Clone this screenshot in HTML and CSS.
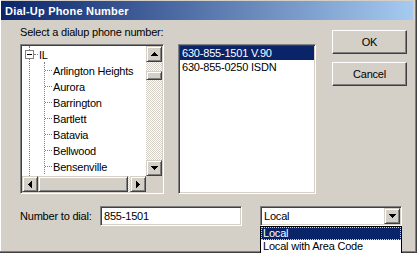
FILE: index.html
```html
<!DOCTYPE html>
<html lang="en">
<head>
  <meta charset="UTF-8">
  <title>Dial-Up Phone Number</title>
  <link rel="stylesheet" href="styles.css">
</head>
<body>
  <div class="window">
    <div class="titlebar">Dial-Up Phone Number</div>

    <div class="dialog">
      <div class="top">
        <div class="pick">
          <div class="caption">Select a dialup phone number:</div>
          <div class="lists">
            <div class="treebox sunken">
              <div class="tree-grid">
                <div class="tree-view">
                  <ul class="tree">
                    <li>
                      <div class="row"><span class="expander"></span><span class="hline"></span><span class="label">IL</span></div>
                      <ul class="children">
                        <li class="row">Arlington Heights</li>
                        <li class="row">Aurora</li>
                        <li class="row">Barrington</li>
                        <li class="row">Bartlett</li>
                        <li class="row">Batavia</li>
                        <li class="row">Bellwood</li>
                        <li class="row">Bensenville</li>
                      </ul>
                    </li>
                  </ul>
                </div>
                <div class="vscroll">
                  <div class="arrow raised">
                    <svg width="7" height="4"><path d="M3 0h1v1h1v1h1v1h1v1H0V3h1V2h1V1h1z"/></svg>
                  </div>
                  <div class="track"><div class="thumb raised v-thumb"></div></div>
                  <div class="arrow raised">
                    <svg width="7" height="4"><path d="M0 0h7v1H6v1H5v1H4v1H3V3H2V2H1V1H0z"/></svg>
                  </div>
                </div>
                <div class="hscroll">
                  <div class="arrow raised">
                    <svg width="4" height="7"><path d="M3 0h1v7H3V6H2V5H1V4H0V3h1V2h1V1h1z"/></svg>
                  </div>
                  <div class="thumb raised h-thumb"></div>
                  <div class="track"></div>
                  <div class="arrow raised">
                    <svg width="4" height="7"><path d="M0 0h1v1h1v1h1v1h1v1H3v1H2v1H1v1H0z"/></svg>
                  </div>
                </div>
                <div class="corner"></div>
              </div>
            </div>

            <div class="listbox sunken">
              <div class="list-inner">
                <div class="item selected">630-855-1501 V.90</div>
                <div class="item">630-855-0250 ISDN</div>
              </div>
            </div>
          </div>
        </div>

        <div class="buttons">
          <div class="btn">OK</div>
          <div class="btn">Cancel</div>
        </div>
      </div>

      <div class="dial-row">
        <div class="dial-label">Number to dial:</div>
        <div class="field sunken">855-1501</div>
        <div class="combo sunken">
          <span class="combo-text">Local</span>
          <div class="arrow raised">
            <svg width="7" height="4"><path d="M0 0h7v1H6v1H5v1H4v1H3V3H2V2H1V1H0z"/></svg>
          </div>
        </div>
      </div>
    </div>

    <div class="dropdown">
      <div class="option selected">Local</div>
      <div class="option">Local with Area Code</div>
    </div>
  </div>
</body>
</html>
```

FILE: styles.css
```css
* {
  margin: 0;
  padding: 0;
  box-sizing: border-box;
  font-family: 'Liberation Sans', Arial, sans-serif;
  font-size: 11px;
  letter-spacing: -0.2px;
}

body {
  background: #d4d0c8;
  width: 417px;
  height: 253px;
  overflow: hidden;
  color: #000;
}

.window {
  position: relative;
  height: 253px;
  padding: 1px 4px 0 1px;
  box-shadow: inset -1px -1px #404040, inset -2px -2px #808080, inset 1px 0 #fff;
}

.titlebar {
  height: 19px;
  line-height: 20px;
  padding-left: 4px;
  color: #fff;
  font-weight: bold;
  letter-spacing: 0.2px;
  background: linear-gradient(to right, #0a246a, #a6caf0);
}

.dialog {
  padding: 6px 0 0 19px;
}

.top {
  display: flex;
}

.caption {
  height: 13px;
  line-height: 13px;
  margin-bottom: 5px;
}

.lists {
  display: flex;
  gap: 14px;
}

/* 3d borders */
.sunken {
  border: 1px solid;
  border-color: #808080 #fff #fff #808080;
  padding: 1px;
  box-shadow: inset 1px 1px #404040, inset -1px -1px #d4d0c8;
  background: #fff;
}

.raised {
  background: #d4d0c8;
  border: 1px solid;
  border-color: #d4d0c8 #404040 #404040 #d4d0c8;
  box-shadow: inset 1px 1px #fff, inset -1px -1px #808080;
}

/* tree view */
.treebox {
  width: 144px;
  height: 150px;
}

.tree-grid {
  display: grid;
  grid-template-columns: 124px 16px;
  grid-template-rows: 130px 16px;
}

.tree-view {
  overflow: hidden;
  background: #fff;
}

.tree, .children {
  list-style: none;
}

.tree {
  margin-left: 7px;
  height: 130px;
  border-left: 1px dotted #808080;
}

.row {
  height: 16px;
  padding-top: 1px;
  display: flex;
  align-items: center;
  white-space: nowrap;
}

.expander {
  width: 9px;
  height: 9px;
  margin-left: -5px;
  border: 1px solid #808080;
  background: #fff;
  display: flex;
  align-items: center;
  justify-content: center;
}

.expander::after {
  content: '';
  width: 5px;
  height: 1px;
  background: #000;
}

.hline {
  width: 4px;
  border-top: 1px dotted #808080;
  margin-right: 1px;
}

.children {
  margin-left: 14px;
  border-left: 1px dotted #808080;
}

.children .row::before {
  content: '';
  width: 7px;
  border-top: 1px dotted #808080;
  margin-right: 1px;
}

/* scrollbars */
.vscroll, .hscroll {
  display: flex;
  background: repeating-conic-gradient(#fff 0 25%, #d4d0c8 0 50%) 0 0 / 2px 2px;
}

.vscroll {
  flex-direction: column;
}

.arrow {
  width: 16px;
  height: 16px;
  flex-shrink: 0;
  display: flex;
  align-items: center;
  justify-content: center;
}

.arrow svg {
  display: block;
  shape-rendering: crispEdges;
}

.track {
  flex: 1;
}

.v-thumb {
  width: 16px;
  height: 9px;
  margin-top: 9px;
}

.h-thumb {
  width: 90px;
  height: 16px;
}

.corner {
  background: #d4d0c8;
}

/* list box */
.listbox {
  width: 138px;
  height: 150px;
}

.item {
  height: 14px;
  line-height: 14px;
  padding-left: 2px;
  white-space: nowrap;
}

.item.selected {
  background: #0a246a;
  color: #fff;
}

/* buttons */
.buttons {
  margin: 4px 0 0 16px;
  display: flex;
  flex-direction: column;
  gap: 8px;
}

.btn {
  width: 75px;
  height: 24px;
  display: flex;
  align-items: center;
  justify-content: center;
  background: #d4d0c8;
  border: 1px solid;
  border-color: #fff #404040 #404040 #fff;
  box-shadow: inset -1px -1px #808080;
}

/* bottom row */
.dial-row {
  display: flex;
  align-items: center;
  margin-top: 12px;
}

.dial-label {
  width: 80px;
}

.field {
  width: 142px;
  height: 20px;
  line-height: 16px;
  padding-left: 3px;
}

.combo {
  width: 142px;
  height: 20px;
  margin-left: 18px;
  display: flex;
  align-items: center;
  padding-left: 3px;
}

.combo-text {
  flex: 1;
}

/* open combo list */
.dropdown {
  position: absolute;
  left: 260px;
  top: 226px;
  width: 142px;
  height: 30px;
  background: #fff;
  border: 1px solid #000;
}

.option {
  height: 13px;
  line-height: 11px;
  padding-left: 1px;
  border: 1px solid transparent;
  white-space: nowrap;
}

.option.selected {
  background: #0a246a;
  color: #fff;
  border: 1px dotted #e8d890;
}
```
